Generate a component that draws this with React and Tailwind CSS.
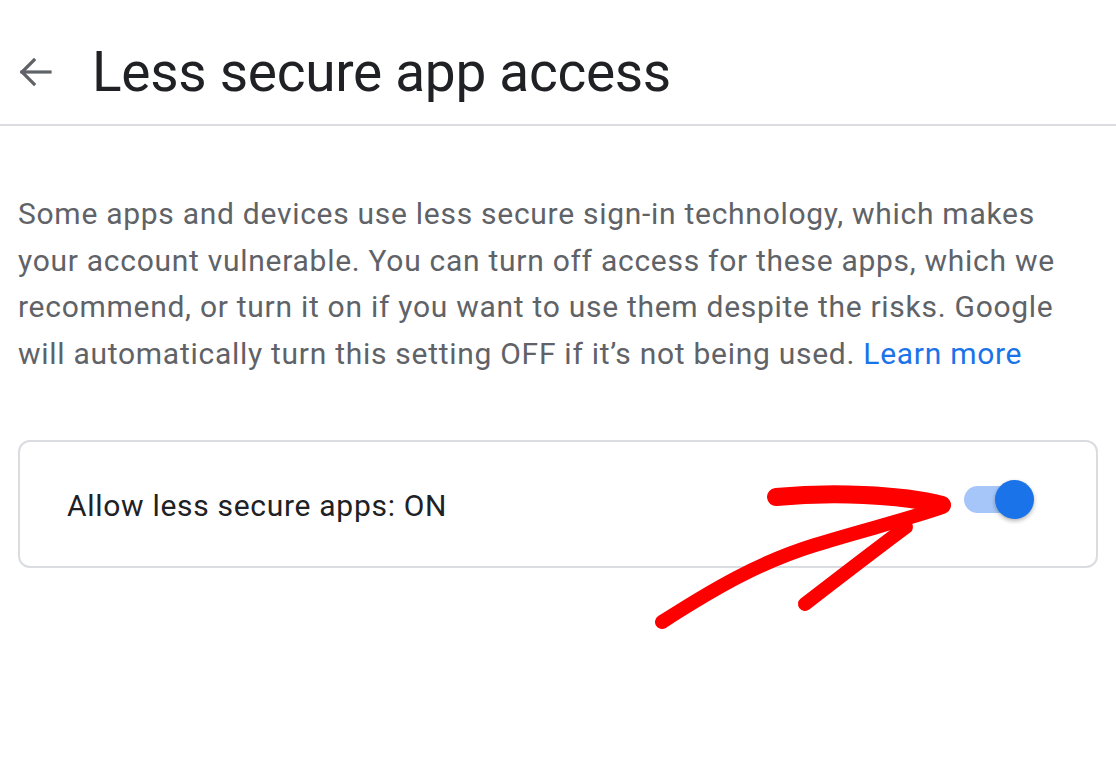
import React from "react";

export default function App() {
  return (
    <div className="relative w-[1116px] h-[766px] bg-white overflow-hidden" style={{ fontFamily: "Roboto, 'Liberation Sans', sans-serif" }}>
      <header className="flex items-center h-[126px] border-b-2 border-[#dadce0] pt-[20px]">
        <div className="w-[92px] flex items-center pl-[19px]">
          <svg width="33" height="30" viewBox="0 0 33 30" fill="none" stroke="#5f6368" strokeWidth="3.2" strokeLinecap="square">
            <path d="M3 15 H31" />
            <path d="M15 3 L3 15 L15 27" strokeLinejoin="miter" />
          </svg>
        </div>
        <h1 className="text-[55px] leading-none text-[#202124] tracking-[-0.3px]">Less secure app access</h1>
      </header>
      <main className="px-[18px] pt-[65px]">
        <p className="text-[30px] leading-[46.7px] tracking-[0.72px] text-[#5f6368] w-[1070px]">
          Some apps and devices use less secure sign-in technology, which makes your account vulnerable. You can turn off access for these apps, which we recommend, or turn it on if you want to use them despite the risks. Google will automatically turn this setting OFF if it’s not being used. <span className="text-[#1a73e8]">Learn more</span>
        </p>
        <div className="mt-[62px] h-[128px] border-2 border-[#dadce0] rounded-[12px] flex items-center justify-between pl-[47px] pr-[62px]">
          <span className="text-[30px] tracking-[0.7px] text-[#202124] pt-[4px]">Allow less secure apps: ON</span>
          <div className="relative w-[70px] h-[39px] flex items-center mb-[9px]">
            <div className="w-[58px] h-[27px] rounded-full bg-[#a6c6fa]" />
            <div className="absolute right-0 top-0 w-[39px] h-[39px] rounded-full bg-[#1a73e8] shadow-[0_2px_4px_rgba(0,0,0,0.3)]" />
          </div>
        </div>
      </main>
      <svg className="absolute left-0 top-0 pointer-events-none" width="1116" height="766" viewBox="0 0 1116 766" fill="none" stroke="#ff0000" strokeLinecap="round" strokeLinejoin="round">
        <path d="M776 497 C830 492 900 494 942 505" strokeWidth="18" />
        <path d="M662 622 C715 588 760 562 815 545 C860 531 905 520 940 508" strokeWidth="14" />
        <path d="M805 604 C840 577 875 550 906 527" strokeWidth="14" />
      </svg>
    </div>
  );
}
